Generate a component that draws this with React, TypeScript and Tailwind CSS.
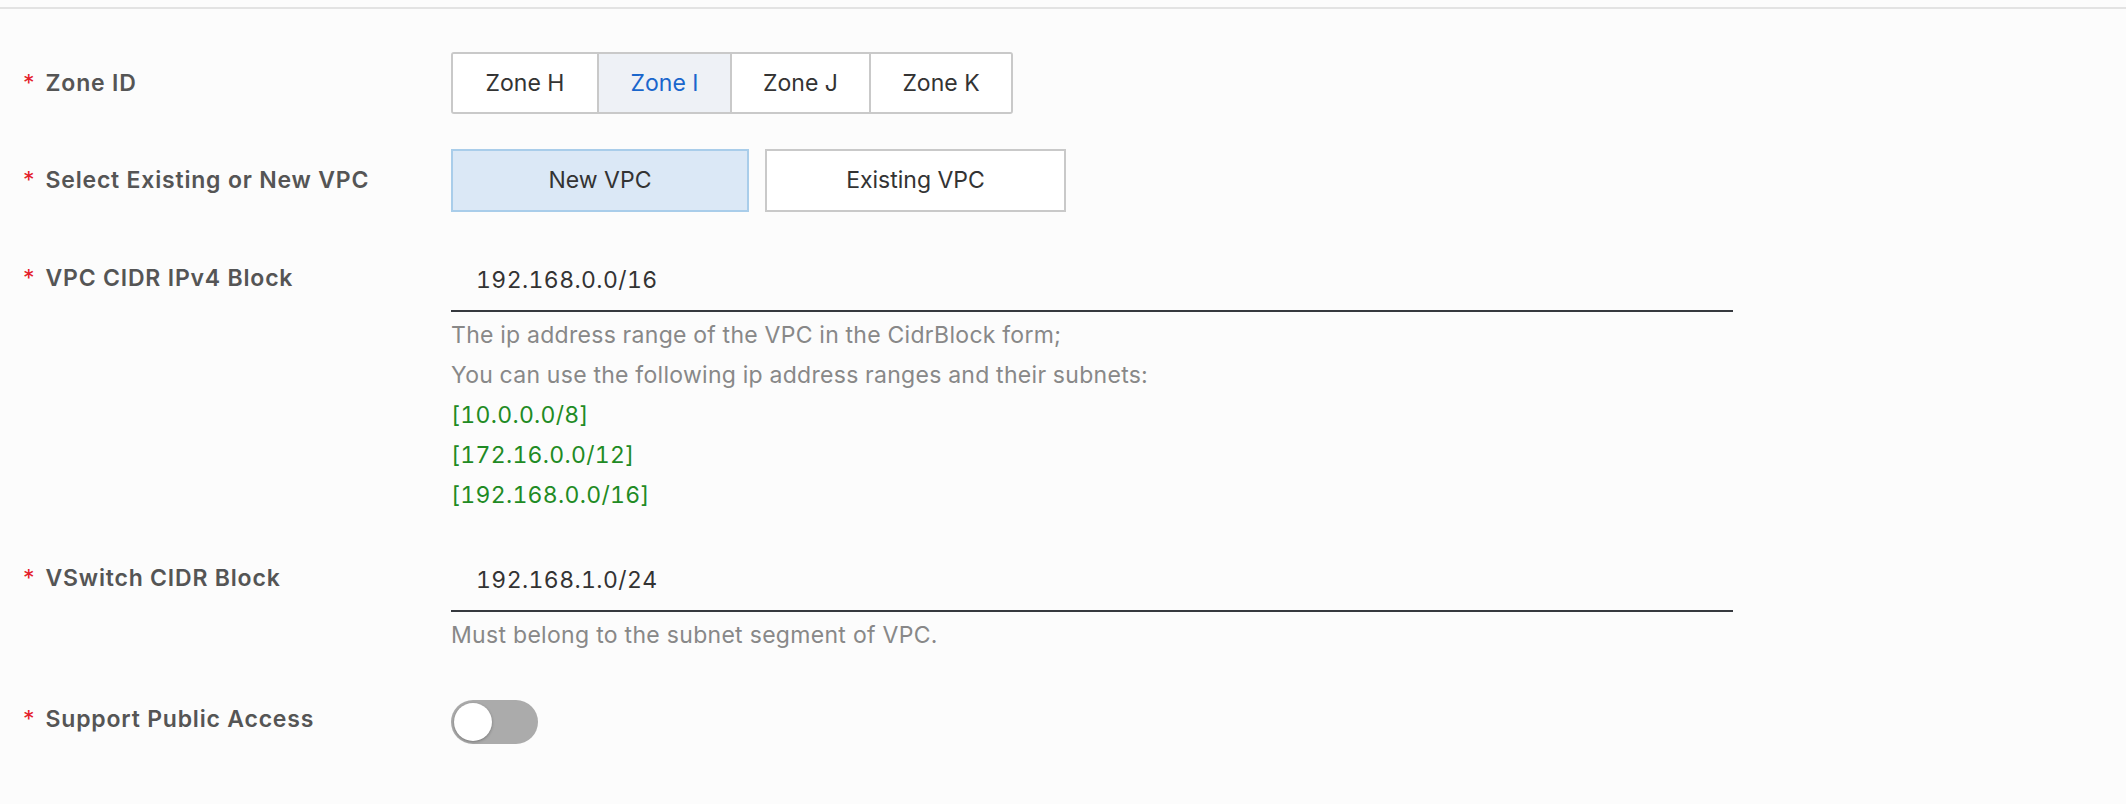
const zones = [
  { name: "Zone H", width: "w-[144px]" },
  { name: "Zone I", width: "w-[133px]" },
  { name: "Zone J", width: "w-[139px]" },
  { name: "Zone K", width: "w-[142px]" },
];

function Label({ text, className = "" }: { text: string; className?: string }) {
  return (
    <div className={`w-[451px] shrink-0 pl-[23px] flex items-center ${className}`}>
      <span className="text-[23px] font-semibold text-[#555555] tracking-[0.8px] whitespace-nowrap">
        <span className="text-[#e4202a] font-normal tracking-normal mr-[11px]">*</span>
        {text}
      </span>
    </div>
  );
}

function LineInput({ value }: { value: string }) {
  return (
    <div className="w-[1282px] h-[62px] border-b-2 border-[#36393e] flex items-center pl-[25px] text-[23px] text-[#333333] tabular-nums tracking-[0.4px]">
      {value}
    </div>
  );
}

export default function App() {
  const selectedZone = "Zone I";

  return (
    <main className="min-h-screen bg-[#fcfcfc] pt-[7px] font-['Inter',sans-serif]">
      <div className="border-t-2 border-[#e3e3e3] pt-[43px]">
        {/* zone */}
        <div className="flex">
          <Label text="Zone ID" className="h-[62px]" />
          <div className="flex h-[62px] border-2 border-[#c9c9c9] rounded-[3px] overflow-hidden">
            {zones.map((z, i) => (
              <button
                key={z.name}
                className={`${z.width} h-full flex items-center justify-center text-[23px] ${
                  i > 0 ? "border-l-2 border-[#c9c9c9]" : ""
                } ${z.name === selectedZone ? "bg-[#eef1f6] text-[#1a66cc]" : "bg-white text-[#333333]"}`}
              >
                {z.name}
              </button>
            ))}
          </div>
        </div>

        {/* vpc type */}
        <div className="flex mt-[35px]">
          <Label text="Select Existing or New VPC" className="h-[63px]" />
          <div className="flex gap-[16px]">
            <button className="w-[298px] h-[63px] border-2 border-[#a9cdea] bg-[#dbe8f6] text-[23px] text-[#333333]">
              New VPC
            </button>
            <button className="w-[301px] h-[63px] border-2 border-[#c9c9c9] bg-white text-[23px] text-[#333333]">
              Existing VPC
            </button>
          </div>
        </div>

        {/* vpc cidr */}
        <div className="flex mt-[38px]">
          <Label text="VPC CIDR IPv4 Block" className="h-[56px]" />
          <div>
            <LineInput value="192.168.0.0/16" />
            <div className="text-[23px] leading-[40px] pt-[3px] tabular-nums tracking-[0.3px]">
              <p className="text-[#888888]">The ip address range of the VPC in the CidrBlock form;</p>
              <p className="text-[#888888]">You can use the following ip address ranges and their subnets:</p>
              <p className="text-[#1f8b24]">[10.0.0.0/8]</p>
              <p className="text-[#1f8b24]">[172.16.0.0/12]</p>
              <p className="text-[#1f8b24]">[192.168.0.0/16]</p>
            </div>
          </div>
        </div>

        {/* vswitch cidr */}
        <div className="flex mt-[35px]">
          <Label text="VSwitch CIDR Block" className="h-[56px]" />
          <div>
            <LineInput value="192.168.1.0/24" />
            <p className="text-[23px] leading-[40px] pt-[3px] text-[#888888] tracking-[0.3px]">
              Must belong to the subnet segment of VPC.
            </p>
          </div>
        </div>

        {/* public access */}
        <div className="flex mt-[45px]">
          <Label text="Support Public Access" className="h-[38px]" />
          <button className="relative w-[87px] h-[44px] rounded-full bg-[#ababab]">
            <span className="absolute left-[3px] top-[3px] w-[38px] h-[38px] rounded-full bg-white shadow-[0_1px_3px_rgba(0,0,0,0.3)]" />
          </button>
        </div>
      </div>
    </main>
  );
}
